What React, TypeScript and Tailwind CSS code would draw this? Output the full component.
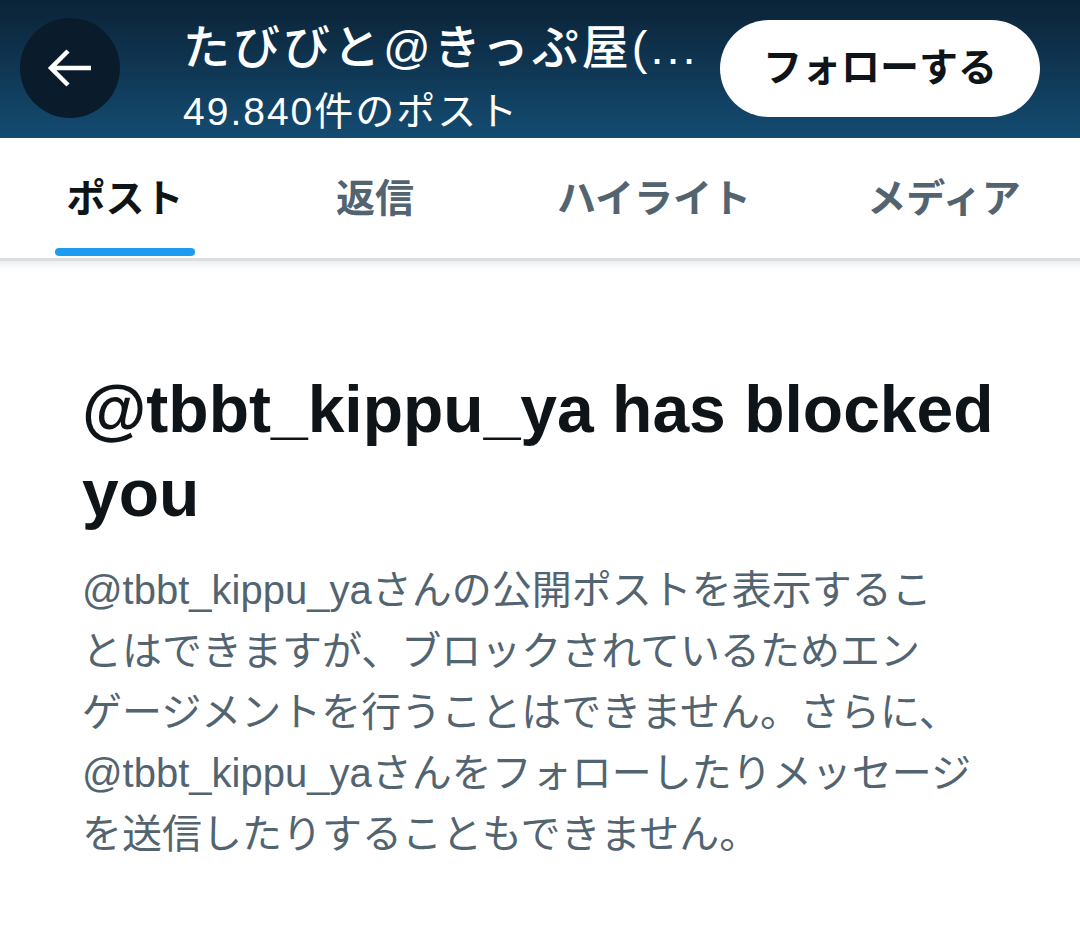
import React from "react";

const FONT = { fontFamily: '"Liberation Sans", "Noto Sans CJK JP", sans-serif' };

export default function App() {
  const tabs = [
    { label: "ポスト", w: "w-[250px]", active: true },
    { label: "返信", w: "w-[250px]", active: false },
    { label: "ハイライト", w: "w-[308px]", active: false },
    { label: "メディア", w: "w-[272px]", active: false },
  ];
  return (
    <div className="w-[1080px] h-[943px] bg-white overflow-hidden" style={FONT}>
      <header className="h-[138px] flex items-start pl-[20px] pr-[40px] bg-gradient-to-b from-[#0b2337] to-[#134c72]">
        <div className="mt-[18px] w-[100px] h-[100px] rounded-full bg-[#0a1c2b] flex items-center justify-center shrink-0">
          <svg width="46" height="40" viewBox="0 0 46 40" fill="none">
            <path d="M21 3 L4 20 L21 37 M4 20 H44" stroke="white" strokeWidth="4.5" strokeLinejoin="miter" />
          </svg>
        </div>
        <div className="ml-[63px] mt-[20px] flex flex-col text-white min-w-0">
          <div className="text-[47px] leading-[56px] whitespace-nowrap font-medium tracking-[3px]">たびびと@きっぷ屋(...</div>
          <div className="mt-[14px] text-[39px] leading-[44px] whitespace-nowrap tracking-[2px]">49.840件のポスト</div>
        </div>
        <div className="ml-auto mt-[20px] w-[320px] h-[97px] rounded-full bg-white flex items-center justify-center shrink-0 text-[#0f1419] text-[39px] font-bold">
          フォローする
        </div>
      </header>

      <nav className="h-[120px] flex">
        {tabs.map((t) => (
          <div key={t.label} className={`${t.w} relative flex items-center justify-center`}>
            <span
              className={`text-[39px] font-bold leading-none ${t.active ? "text-[#0f1419]" : "text-[#536471]"}`}
            >
              {t.label}
            </span>
            {t.active && (
              <div className="absolute bottom-[2px] left-1/2 -translate-x-1/2 w-[140px] h-[8px] rounded-full bg-[#1d9bf0]" />
            )}
          </div>
        ))}
      </nav>
      <div className="h-[3px] bg-[#dcdfe2]" />
      <div className="h-[8px] bg-gradient-to-b from-[#eceef0] to-white" />

      <main className="pl-[82px] pt-[98px]">
        <h1 className="text-[66px] leading-[84px] font-bold text-[#0f1419]">
          <span className="block whitespace-nowrap">@tbbt_kippu_ya has blocked</span>
          <span className="block whitespace-nowrap">you</span>
        </h1>
        <div className="mt-[25px] text-[40px] leading-[61px] text-[#536471]">
          <span className="block whitespace-nowrap">@tbbt_kippu_yaさんの公開ポストを表示するこ</span>
          <span className="block whitespace-nowrap">とはできますが、ブロックされているためエン</span>
          <span className="block whitespace-nowrap">ゲージメントを行うことはできません。さらに、</span>
          <span className="block whitespace-nowrap">@tbbt_kippu_yaさんをフォローしたりメッセージ</span>
          <span className="block whitespace-nowrap">を送信したりすることもできません。</span>
        </div>
      </main>
    </div>
  );
}
